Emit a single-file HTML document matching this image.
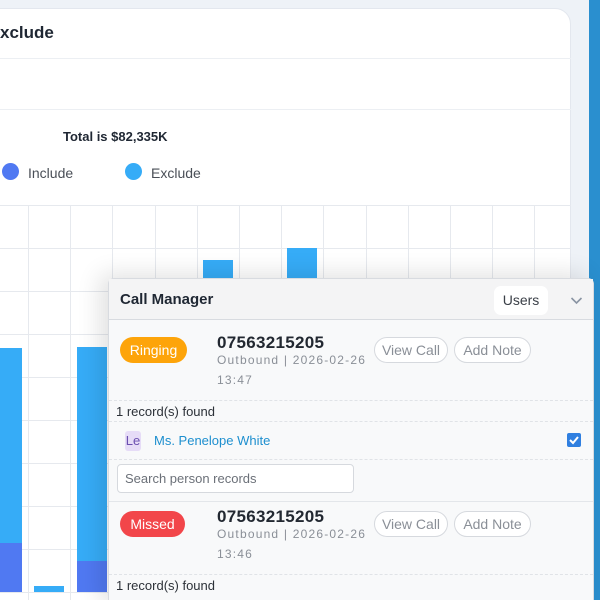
<!DOCTYPE html>
<html style="width:600px;height:600px;overflow:hidden"><head><style>
*{margin:0;padding:0;box-sizing:border-box}
body{width:600px;height:600px;overflow:hidden;background:#eef2f7;font-family:"Liberation Sans",sans-serif;position:relative}
.abs{position:absolute}
.card{left:-30px;top:8px;width:601px;height:620px;background:#fff;border:1px solid #e3e7ee;border-radius:16px}
.vl{position:absolute;top:205px;height:395px;width:1px;background:#e6e9ee}
.hl{position:absolute;left:0;width:571px;height:1px;background:#e6e9ee}
.bar{position:absolute;background:#36acf7}
.dk{position:absolute;background:#5079f2}
.panel{left:108px;top:278px;width:486px;height:330px;background:#f8f9fa;border:1px solid #d8dbe0;border-radius:6px 6px 0 0;box-shadow:-8px -4px 24px rgba(0,0,0,.12)}
.pill{position:absolute;color:#fff;font-size:14px;border-radius:14px;text-align:center;line-height:26px;height:26px}
.btn{position:absolute;height:26px;line-height:24px;border:1px solid #d6d9de;border-radius:13px;background:#fff;color:#8a8f97;font-size:14px;text-align:center}
.num{position:absolute;font-weight:bold;font-size:17px;color:#222831;letter-spacing:.3px}
.sub{position:absolute;font-size:12px;color:#8a8f97;letter-spacing:1.2px}
.dash{position:absolute;left:0;width:484px;border-top:1px dashed #e0e3e7}
.rec{position:absolute;left:7px;font-size:13px;color:#2c3138}
</style></head><body>
<div class="abs card"></div>
<div class="abs" style="left:0;top:23px;font-size:17px;font-weight:bold;color:#1f2733">xclude</div>
<div class="hl" style="top:58px;background:#eceff3"></div>
<div class="hl" style="top:109px;background:#eceff3"></div>
<div class="abs" style="left:63px;top:129px;font-size:13px;font-weight:bold;color:#1f2733">Total is $82,335K</div>
<div class="abs" style="left:2px;top:163px;width:17px;height:17px;border-radius:50%;background:#5079f2"></div>
<div class="abs" style="left:28px;top:165px;font-size:14px;color:#4a4f57">Include</div>
<div class="abs" style="left:125px;top:163px;width:17px;height:17px;border-radius:50%;background:#36acf7"></div>
<div class="abs" style="left:151px;top:165px;font-size:14px;color:#4a4f57">Exclude</div>
<div class="hl" style="top:205px"></div><div class="hl" style="top:248px"></div><div class="hl" style="top:291px"></div><div class="hl" style="top:334px"></div><div class="hl" style="top:377px"></div><div class="hl" style="top:420px"></div><div class="hl" style="top:463px"></div><div class="hl" style="top:506px"></div><div class="hl" style="top:549px"></div><div class="hl" style="top:592px"></div>
<div class="vl" style="left:28px"></div><div class="vl" style="left:70px"></div><div class="vl" style="left:112px"></div><div class="vl" style="left:155px"></div><div class="vl" style="left:197px"></div><div class="vl" style="left:239px"></div><div class="vl" style="left:281px"></div><div class="vl" style="left:323px"></div><div class="vl" style="left:366px"></div><div class="vl" style="left:408px"></div><div class="vl" style="left:450px"></div><div class="vl" style="left:492px"></div><div class="vl" style="left:534px"></div>
<div class="bar" style="left:0;top:348px;width:22px;height:244px"></div><div class="dk" style="left:0;top:543px;width:22px;height:49px"></div>
<div class="bar" style="left:34px;top:586px;width:30px;height:6px"></div>
<div class="bar" style="left:77px;top:347px;width:30px;height:245px"></div><div class="dk" style="left:77px;top:561px;width:30px;height:31px"></div>
<div class="bar" style="left:203px;top:260px;width:30px;height:40px"></div>
<div class="bar" style="left:287px;top:248px;width:30px;height:50px"></div>
<div class="abs" style="left:589px;top:0;width:11px;height:600px;background:#2a8fcf"></div>
<div class="abs panel">
 <div class="abs" style="left:0;top:0;width:484px;height:41px;background:#f4f4f5;border-bottom:1px solid #d8dbe0"></div>
 <div class="abs" style="left:11px;top:12px;font-size:15px;font-weight:bold;color:#1f2733">Call Manager</div>
 <div class="abs" style="left:385px;top:7px;width:54px;height:29px;background:#fff;border-radius:7px;font-size:14px;color:#3a3f47;text-align:center;line-height:29px">Users</div>
 <svg class="abs" style="left:461px;top:17px" width="13" height="9" viewBox="0 0 13 9"><path d="M1.5 2 L6.5 7 L11.5 2" fill="none" stroke="#8a94a3" stroke-width="1.6"/></svg>
 <div class="pill" style="left:11px;top:58px;width:67px;background:#fda40a">Ringing</div>
 <div class="num" style="left:108px;top:54px">07563215205</div>
 <div class="sub" style="left:108px;top:74px">Outbound | 2026-02-26</div>
 <div class="sub" style="left:108px;top:94px">13:47</div>
 <div class="btn" style="left:265px;top:58px;width:74px">View Call</div>
 <div class="btn" style="left:345px;top:58px;width:77px">Add Note</div>
 <div class="dash" style="top:121px"></div>
 <div class="rec" style="top:125px">1 record(s) found</div>
 <div class="dash" style="top:142px"></div>
 <div class="abs" style="left:16px;top:152px;width:16px;height:20px;background:#e6dcf7;border-radius:3px;font-size:13px;color:#6b4fb0;text-align:center;line-height:20px">Le</div>
 <div class="abs" style="left:45px;top:154px;font-size:13px;color:#1d8fcf">Ms. Penelope White</div>
 <div class="abs" style="left:458px;top:154px;width:14px;height:14px;background:#2f7fe0;border-radius:2px"><svg width="14" height="14"><path d="M3 7 L6 10 L11 4" fill="none" stroke="#fff" stroke-width="2"/></svg></div>
 <div class="dash" style="top:180px"></div>
 <div class="abs" style="left:8px;top:185px;width:237px;height:29px;background:#fff;border:1px solid #d6d9de;border-radius:4px;font-size:13px;color:#6b7078;padding:6px 7px">Search person records</div>
 <div class="abs" style="left:0;top:222px;width:484px;height:1px;background:#e3e6ea"></div>
 <div class="pill" style="left:11px;top:232px;width:65px;background:#f2464a">Missed</div>
 <div class="num" style="left:108px;top:228px">07563215205</div>
 <div class="sub" style="left:108px;top:248px">Outbound | 2026-02-26</div>
 <div class="sub" style="left:108px;top:268px">13:46</div>
 <div class="btn" style="left:265px;top:232px;width:74px">View Call</div>
 <div class="btn" style="left:345px;top:232px;width:77px">Add Note</div>
 <div class="dash" style="top:295px"></div>
 <div class="rec" style="top:299px">1 record(s) found</div>
</div>
</body></html>
